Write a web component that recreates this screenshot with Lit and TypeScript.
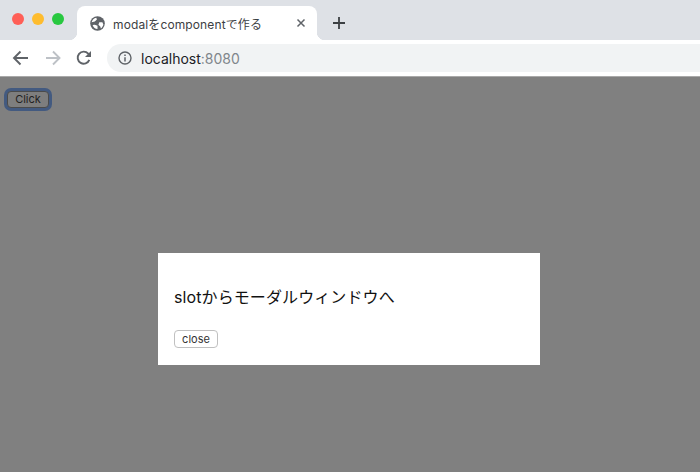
import { LitElement, html, css } from "lit";
import { customElement } from "lit/decorators.js";

@customElement("app-root")
export class AppRoot extends LitElement {
  static styles = css`
    :host { display: block; width: 700px; height: 472px; position: relative; overflow: hidden;
      font-family: Inter, "Liberation Sans", "Noto Sans CJK JP", sans-serif; }
    .strip { height: 40px; background: #dee1e6; display: flex; align-items: flex-end; box-sizing: border-box; }
    .lights { display: flex; gap: 8px; width: 77px; box-sizing: border-box; padding: 0 0 15px 12px; align-self: flex-end; }
    .light { width: 12px; height: 12px; border-radius: 50%; box-sizing: border-box; }
    .r { background: #ff5f57; } .y { background: #febc2e; } .g { background: #28c840; }
    .tab { position: relative; width: 240px; height: 34px; background: #fff; border-radius: 8px 8px 0 0;
      display: flex; align-items: center; padding: 0 11px 0 13px; box-sizing: border-box; gap: 8px; }
    .tab::before, .tab::after { content: ""; position: absolute; bottom: 0; width: 8px; height: 8px; }
    .tab::before { left: -8px; background: radial-gradient(circle at 0 0, transparent 8px, #fff 8.5px); }
    .tab::after { right: -8px; background: radial-gradient(circle at 100% 0, transparent 8px, #fff 8.5px); }
    .title { flex: 1; font-size: 12px; color: #3c4043; white-space: nowrap; letter-spacing: 0.12px; }
    .plus { margin-left: 16px; display: flex; align-self: center; padding-top: 6px; }
    svg { display: block; flex: none; }
    .bar { height: 36px; background: #fff; display: flex; align-items: center; padding: 0 0 0 12px; box-sizing: border-box; }
    .navs { display: flex; gap: 14px; width: 95px; flex: none; align-items: center; }
    .omni { flex: 1; height: 28px; background: #f1f3f4; border-radius: 14px 0 0 14px; display: flex; align-items: center;
      padding-left: 11px; gap: 9px; font-size: 14px; color: #202124; }
    .port { color: #80868b; }
    .page { height: 396px; background: #808080; border-top: 1px solid #a9a9a9; box-sizing: border-box; padding: 14px 0 0 7px; }
    .click { display: block; box-sizing: border-box; width: 42px; height: 17px; padding: 0; font: inherit; font-size: 11px;
      color: #222; line-height: 15px; text-align: center; background: #7e7e7e; border: 1px solid #4b4b4b; border-radius: 4px;
      box-shadow: 0 0 0 3px #435a80; }
    .modal { position: absolute; left: 158px; top: 253px; width: 382px; height: 112px; background: #fff; box-sizing: border-box;
      padding: 32px 16px 0; }
    .msg { margin: 0; font-size: 16px; line-height: 24px; color: #111; white-space: nowrap; letter-spacing: 0.1px; }
    .close { display: block; margin-top: 21px; box-sizing: border-box; width: 44px; height: 18px; padding: 0; font: inherit;
      font-size: 11px; line-height: 16px; text-align: center; color: #333; background: #fff; border: 1px solid #c0c0c0; border-radius: 4px; }
  `;

  render() {
    return html`
      <div class="strip">
        <div class="lights"><span class="light r"></span><span class="light y"></span><span class="light g"></span></div>
        <div class="tab">
          <svg width="15" height="15" viewBox="0 0 15 15"><circle cx="7.500" cy="7.500" r="7.300" fill="#5f6368"/><path fill="#fff" d="M1.600 6.200 4.800 5.600 6.900 3.400 6.300 1.700C4 2.200 2.200 3.900 1.600 6.200zM4.800 8.800l2.700 1v3.300c-2.300-.2-4-1.800-4.900-4.200zM9.300 6.200h3.100l1 2.600c-.5 1.500-1.300 2.800-2.500 3.600l-.6-2-1.900-1.700z"/></svg>
          <span class="title">modalをcomponentで作る</span>
          <svg width="10" height="10" viewBox="0 0 10 10"><path d="M1.500 1.500l7 7M8.500 1.500l-7 7" stroke="#5f6368" stroke-width="1.500" fill="none"/></svg>
        </div>
        <div class="plus"><svg width="12" height="12" viewBox="0 0 12 12"><path d="M6 0v12M0 6h12" stroke="#3c4043" stroke-width="1.800" fill="none"/></svg></div>
      </div>
      <div class="bar">
        <div class="navs">
          <svg width="18" height="16" viewBox="0 0 18 16"><path d="M16 8H3M8.500 1.500 2 8l6.500 6.500" stroke="#5f6368" stroke-width="1.900" fill="none"/></svg>
          <svg width="18" height="16" viewBox="0 0 18 16"><path d="M2 8h13M9 1.500 15.500 8 9 14.500" stroke="#bdc1c6" stroke-width="1.900" fill="none"/></svg>
          <svg width="16" height="16" viewBox="0 0 16 16"><path d="M13.300 9.800A6 6 0 1 1 12.200 3.700L14 5.500" stroke="#5f6368" stroke-width="1.900" fill="none"/><path d="M15 1v6H9z" fill="#5f6368"/></svg>
        </div>
        <div class="omni">
          <svg width="14" height="14" viewBox="0 0 14 14"><circle cx="7" cy="7" r="6" stroke="#5f6368" stroke-width="1.400" fill="none"/><path d="M7 6.200v4.200M7 3.500v1.500" stroke="#5f6368" stroke-width="1.500" fill="none"/></svg>
          <span>localhost<span class="port">:8080</span></span>
        </div>
      </div>
      <div class="page"><button class="click">Click</button></div>
      <div class="modal">
        <p class="msg">slotからモーダルウィンドウへ</p>
        <button class="close">close</button>
      </div>
    `;
  }
}
